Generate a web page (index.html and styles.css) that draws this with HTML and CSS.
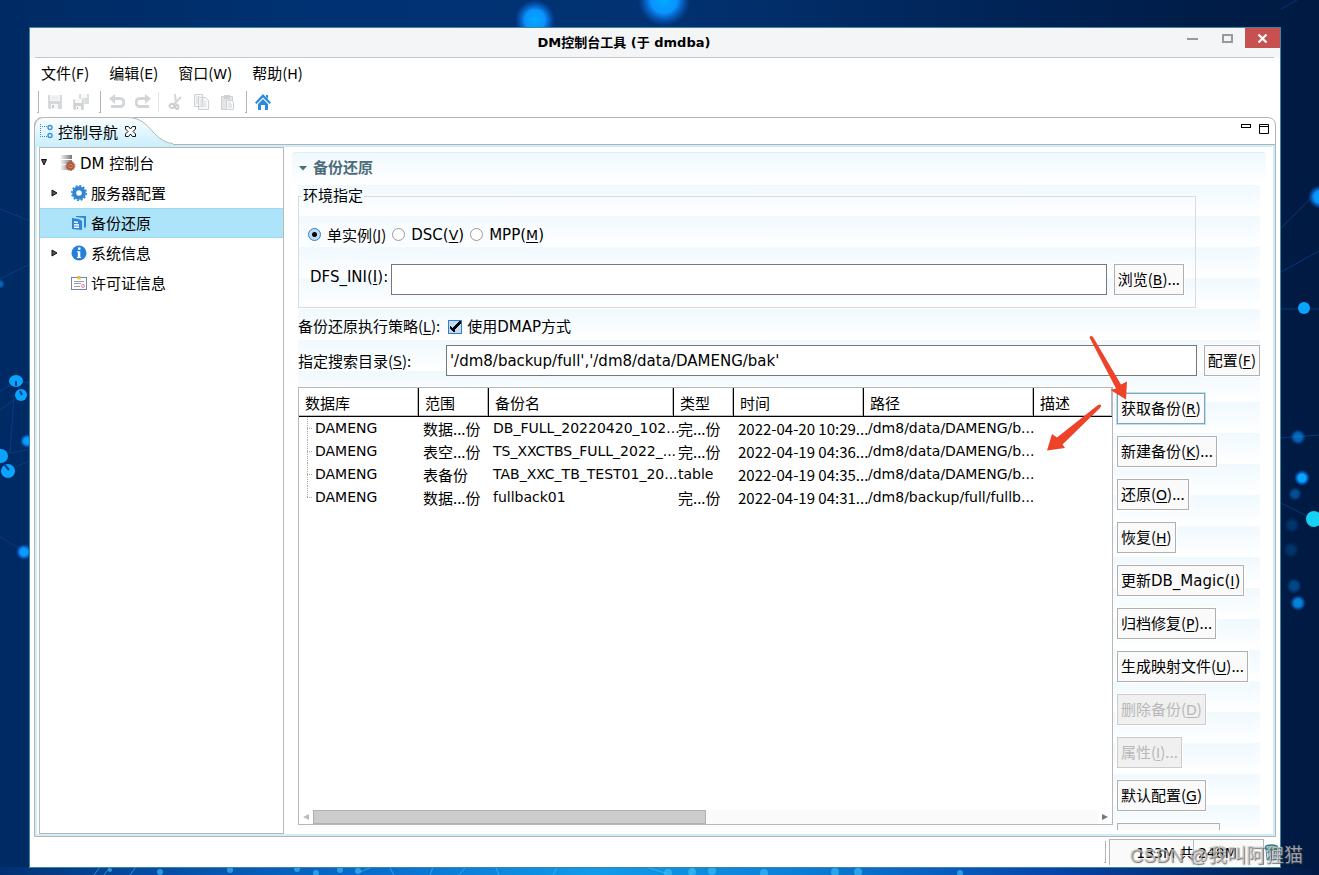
FILE: index.html
```html
<!DOCTYPE html>
<html lang="zh-CN">
<head>
<meta charset="utf-8">
<title>DM控制台工具</title>
<link rel="stylesheet" href="styles.css">
</head>
<body>
<svg class="wallpaper" viewBox="0 0 1319 875" preserveAspectRatio="none" aria-hidden="true">
  <defs>
    <radialGradient id="glow"><stop offset="0" stop-color="#0af"/><stop offset=".5" stop-color="#0a93ff"/><stop offset="1" stop-color="#0a6cf0" stop-opacity="0"/></radialGradient>
    <linearGradient id="floor"><stop offset="0" stop-color="#01306f"/><stop offset=".1" stop-color="#044a9f"/><stop offset=".3" stop-color="#0a70d0"/><stop offset=".45" stop-color="#129be8"/><stop offset=".6" stop-color="#0d7fd6"/><stop offset=".8" stop-color="#0644a8"/><stop offset=".95" stop-color="#012458"/><stop offset="1" stop-color="#001a45"/></linearGradient>
  </defs>
  <rect y="867" width="1319" height="8" fill="url(#floor)"/>
  <g stroke="#0a4a9c" stroke-opacity=".6" fill="none">
    <path d="M0 209l30 12M0 279l30-15M0 391l16-9M16 381l13 2M14 395l-4 58M10 453l20-4M8 470l22-9M0 410l20-14M0 537l24 14M1281 272l38-21M1281 228l38-38M1281 438l38-3M1281 503l32 16M1281 309h38M1281 9l16-9"/>
  </g>
  <g fill="url(#glow)">
    <circle cx="535" cy="20" r="20"/><circle cx="664" cy="0" r="26"/><circle cx="1320" cy="197" r="12"/>
    <circle cx="27" cy="441" r="7"/><circle cx="24" cy="552" r="8"/><circle cx="0" cy="284" r="5" opacity=".5"/>
    <circle cx="1298" cy="437" r="8" opacity=".6"/><circle cx="1302" cy="478" r="8"/><circle cx="1295" cy="494" r="7" opacity=".4"/>
    <circle cx="1292" cy="525" r="8" opacity=".2"/><circle cx="1291" cy="550" r="8" opacity=".2"/><circle cx="1294" cy="586" r="8" opacity=".35"/><circle cx="1298" cy="603" r="8" opacity=".8"/>
  </g>
  <g fill="#0aa4ff">
    <ellipse cx="16" cy="381" rx="7" ry="6"/><circle cx="21" cy="395" r="6"/><circle cx="1" cy="456" r="7"/><circle cx="8" cy="471" r="7"/>
    <circle cx="1304" cy="308" r="6"/><circle cx="1302" cy="478" r="4"/><circle cx="1314" cy="519" r="8" fill="#15d2f5"/>
  </g>
  <path d="M16 381v5M20 391l2 4M4 464l5 6" stroke="#063f8c" stroke-width="2"/>
  <g fill="#3cb8f4" opacity=".7">
    <circle cx="110" cy="870" r="2"/><circle cx="160" cy="872" r="3"/><circle cx="230" cy="870" r="3"/><circle cx="297" cy="869" r="3"/><circle cx="316" cy="873" r="3"/><circle cx="340" cy="870" r="3"/><circle cx="358" cy="871" r="3"/><circle cx="668" cy="873" r="4"/><circle cx="692" cy="872" r="4"/><circle cx="712" cy="871" r="4"/><circle cx="764" cy="873" r="4"/><circle cx="835" cy="872" r="4"/><circle cx="858" cy="872" r="4"/><circle cx="960" cy="873" r="3"/>
  </g>
  <path d="M94 875l6-8M104 875l6-8M130 875l6-8M360 872l12-5M390 868l4 7M430 875l3-8M459 875l7-8M496 868l3 7M553 875l4-8M646 867l22 7M694 868l-4 7" stroke="#4cc3f5" stroke-opacity=".6"/>
</svg>

<div class="window">
  <header class="titlebar">
    <h1>DM控制台工具 (于 dmdba)</h1>
    <div class="window-controls">
      <button aria-label="最小化"><svg width="35" height="20"><path d="M12 11h11" stroke="#999" stroke-width="2"/></svg></button>
      <button aria-label="最大化"><svg width="35" height="20"><rect x="13" y="7" width="9" height="7" fill="none" stroke="#999" stroke-width="2"/></svg></button>
      <button class="close" aria-label="关闭"><svg width="35" height="20"><path d="M13.500 6.500l8 8m0-8l-8 8" stroke="#fff" stroke-width="2.200"/></svg></button>
    </div>
  </header>

  <nav class="menubar cjk">
    <button>文件(<span>F</span>)</button><button>编辑(<span>E</span>)</button><button>窗口(<span>W</span>)</button><button>帮助(<span>H</span>)</button>
  </nav>

  <div class="toolbar">
    <i class="handle"></i>
    <button disabled aria-label="保存"><svg width="16" height="16"><path d="M1 1h14v14H2l-1-1z" fill="#d6d9db"/><path d="M3 1h10v6H3zM4 10h7v5H4z" fill="#f7f7f7"/><path d="M4 3h8M4 5h8" stroke="#e4e6e8"/><path d="M5 11h2v3H5z" fill="#c9ccce"/></svg></button>
    <button disabled aria-label="全部保存"><svg width="18" height="16"><path d="M7 0h10v10H7z" fill="#dadddf"/><path d="M9 0h6v4H9z" fill="#f8f8f8"/><path d="M1 5h11v11H2l-1-1z" fill="#d0d3d5" stroke="#fff" stroke-width=".500"/><path d="M3 5h7v4H3zM4 12h5v4H4z" fill="#f8f8f8"/><path d="M5 13h1v2H5z" fill="#bbb"/></svg></button>
    <i class="handle"></i>
    <button disabled aria-label="撤销"><svg width="16" height="16"><path d="M4 4.500h7a4 4 0 0 1 0 8H2" fill="none" stroke="#d3d6d8" stroke-width="3"/><path d="M0 4.500L6 0v10z" fill="#d3d6d8"/></svg></button>
    <button disabled aria-label="重做"><svg width="16" height="16"><path d="M12 4.500H5a4 4 0 0 0 0 8h9" fill="none" stroke="#d3d6d8" stroke-width="3"/><path d="M16 4.500L10 0v10z" fill="#d3d6d8"/></svg></button>
    <i class="divider"></i>
    <button disabled aria-label="剪切"><svg width="16" height="16"><path d="M8 0l1 10M14 3L6 11" stroke="#d3d6d8" stroke-width="2" fill="none"/><ellipse cx="5" cy="12" rx="2.500" ry="2" fill="none" stroke="#cbced0" stroke-width="1.800"/><ellipse cx="10" cy="13" rx="1.500" ry="2" fill="none" stroke="#cbced0" stroke-width="1.800"/></svg></button>
    <button disabled aria-label="复制"><svg width="16" height="16"><path d="M1.500.500h8v12h-8zM5.500 3.500h7l3 3v9h-10z" fill="#f7f7f7" stroke="#cfd2d5"/><path d="M3 3h4M3 5h2M3 7h2M3 9h2M7 6h4M7 8h6M7 10h6M7 12h6" stroke="#d6d9db"/></svg></button>
    <button disabled aria-label="粘贴"><svg width="16" height="16"><path d="M2.500 2.500h11v13h-11z" fill="#e3e5e7" stroke="#cfd2d5"/><path d="M5 1h6v4H5z" fill="#cfd2d5"/><path d="M7.500 6.500h5l2 2v7h-7z" fill="#fafafa" stroke="#cfd2d5"/><path d="M9 9h3M9 11h4M9 13h4" stroke="#cfd2d5"/></svg></button>
    <i class="handle"></i>
    <button aria-label="主页"><svg width="16" height="16"><path d="M0 8.500L8 0l8 8.500L14.500 10 8 3.500 1.500 10z" fill="#2e8ade"/><path d="M3 10l5-5 5 5v6h-3v-5H6v5H3zM11 1h2v4l-2-2z" fill="#2e8ade"/></svg></button>
  </div>

  <main class="folder">
    <div class="tabbar">
      <div class="tab">
        <svg class="tab-shape" width="138" height="28"><defs><linearGradient id="tabfill" x2="0" y2="1"><stop offset="0" stop-color="#fbfeff"/><stop offset="1" stop-color="#cbeffc"/></linearGradient></defs><path d="M0 28V8Q1 1 8 0H92C106 0 112 8 119 16Q128 26 138 27v1z" fill="url(#tabfill)"/><path d="M0 8.500Q1 1 8.500.500H92C106 .500 112 8 119 16Q128 26 138 26.500" fill="none" stroke="#b4b4b4"/></svg>
        <svg width="14" height="16"><path d="M1.500 1v12.500M1 3.500h7M1 13.500h7" fill="none" stroke="#3c8fd9" stroke-dasharray="1 1"/><circle cx="11" cy="4.500" r="2" fill="none" stroke="#3c8fd9" stroke-width="1.400"/><circle cx="11" cy="12.500" r="2" fill="none" stroke="#3c8fd9" stroke-width="1.400"/></svg>
        <span>控制导航</span>
        <button aria-label="关闭标签"><svg width="11" height="11"><path d="M.500.500h3l2 2.500 2-2.500h3v2.500l-2.500 2.500 2.500 2.500v2.500h-3l-2-2.500-2 2.500h-3V8L3 5.500.500 3z" fill="#fff" stroke="#111"/></svg></button>
      </div>
      <div class="tab-tools">
        <button aria-label="最小化视图"><svg width="10" height="10"><rect x=".500" y=".500" width="9" height="3" fill="#fff" stroke="#000"/></svg></button>
        <button aria-label="最大化视图"><svg width="10" height="10"><path d="M.500.500h9v9h-9zM0 2.500h10" fill="none" stroke="#000"/></svg></button>
      </div>
    </div>

    <div class="folder-body">
      <ul class="tree">
        <li><svg class="twist" width="8" height="10"><path d="M1.500 1.500h5L4 7z" fill="#555" stroke="#111"/></svg>
          <svg width="16" height="16"><defs><linearGradient id="srv"><stop offset="0" stop-color="#eee"/><stop offset="1" stop-color="#777"/></linearGradient></defs><path d="M1 0h11v4H1zM1 5h11v4H1zM1 10h11v5H1z" fill="url(#srv)"/><circle cx="10.500" cy="11" r="3.200" fill="#d38a6c" stroke="#b0593a" stroke-width="2"/><circle cx="10.500" cy="11" r="4.500" fill="none" stroke="#b0593a" stroke-dasharray="1.500 1.300"/><circle cx="10.500" cy="11" r="1.200" fill="#a34d30"/></svg>
          <span>DM 控制台</span></li>
        <li class="child"><svg class="twist" width="8" height="10"><path d="M1 2l5 3-5 3z" fill="#555" stroke="#111"/></svg>
          <svg width="16" height="16"><circle cx="8" cy="8" r="4.800" fill="#fff" stroke="#2e86d6" stroke-width="4"/><circle cx="8" cy="8" r="7.200" fill="none" stroke="#2e86d6" stroke-width="1.600" stroke-dasharray="2 1.770"/></svg>
          <span>服务器配置</span></li>
        <li class="child selected"><i class="twist"></i>
          <svg width="16" height="16"><path d="M5 1l10 0v11l-2 1V3L5 2z" fill="#2e86d6"/><path d="M1 3l7 1 3 2v9L1 14z" fill="#2e86d6"/><path d="M3 7l4 .500M3 9.700l5 .300M3 12.300h5" stroke="#fff" stroke-width="1.400"/></svg>
          <span>备份还原</span></li>
        <li class="child"><svg class="twist" width="8" height="10"><path d="M1 2l5 3-5 3z" fill="#555" stroke="#111"/></svg>
          <svg width="16" height="16"><circle cx="8" cy="8" r="7.500" fill="#2680d8"/><path d="M7 2.500h2.500v2.200H7zM6 6.300h3.300V12H10v1H6v-1h.800V7.300H6z" fill="#fff"/></svg>
          <span>系统信息</span></li>
        <li class="child"><i class="twist"></i>
          <svg width="16" height="16"><rect x=".500" y="2.500" width="15" height="12" fill="#fff" stroke="#7084ad"/><path d="M3 6.500h10M3 8.500h7M3 11.500h6" stroke="#8ea0c0"/><path d="M6.500 1h3v4L8 4l-1.500 1z" fill="#f2b932"/><circle cx="12" cy="11" r="1.500" fill="none" stroke="#e87f9c"/></svg>
          <span>许可证信息</span></li>
      </ul>

      <section class="form">
        <h2><svg width="8" height="5"><path d="M0 0h8L4 4.500z" fill="#4c6c78"/></svg>备份还原</h2>
        <div class="content">
          <fieldset>
            <legend>环境指定</legend>
            <div class="radios cjk">
              <label><input type="radio" name="mode" checked>单实例(<u>J</u>)</label>
              <label class="latin"><input type="radio" name="mode">DSC(<u>V</u>)</label>
              <label class="latin"><input type="radio" name="mode">MPP(<u>M</u>)</label>
            </div>
            <div class="row ini">
              <label for="ini">DFS_INI(<u>I</u>):</label>
              <input class="text" type="text" id="ini">
              <button class="btn cjk">浏览(<u>B</u>)...</button>
            </div>
          </fieldset>
          <div class="row policy cjk">
            <span>备份还原执行策略(<u>L</u>):</span>
            <label class="latin"><input type="checkbox" checked>使用DMAP方式</label>
          </div>
          <div class="row search">
            <label class="cjk" for="dir">指定搜索目录(<u>S</u>):</label>
            <input class="text" type="text" id="dir" value="'/dm8/backup/full','/dm8/data/DAMENG/bak'">
            <button class="btn cjk">配置(<u>F</u>)</button>
          </div>
          <div class="results">
            <div class="grid">
              <table>
                <colgroup><col class="c120"><col class="c70"><col class="c185"><col class="c60"><col class="c130"><col class="c170"><col></colgroup>
                <thead><tr><th>数据库</th><th>范围</th><th>备份名</th><th>类型</th><th>时间</th><th>路径</th><th>描述</th></tr></thead>
                <tbody>
                  <tr><td>DAMENG</td><td class="cjk">数据...份</td><td>DB_FULL_20220420_102...</td><td class="cjk">完...份</td><td class="cjk">2022-04-20 10:29...</td><td>/dm8/data/DAMENG/b...</td><td></td></tr>
                  <tr><td>DAMENG</td><td class="cjk">表空...份</td><td>TS_XXCTBS_FULL_2022_...</td><td class="cjk">完...份</td><td class="cjk">2022-04-19 04:36...</td><td>/dm8/data/DAMENG/b...</td><td></td></tr>
                  <tr><td>DAMENG</td><td class="cjk">表备份</td><td>TAB_XXC_TB_TEST01_20...</td><td>table</td><td class="cjk">2022-04-19 04:35...</td><td>/dm8/data/DAMENG/b...</td><td></td></tr>
                  <tr><td>DAMENG</td><td class="cjk">数据...份</td><td>fullback01</td><td class="cjk">完...份</td><td class="cjk">2022-04-19 04:31...</td><td>/dm8/backup/full/fullb...</td><td></td></tr>
                </tbody>
              </table>
              <div class="scrollbar">
                <svg width="14" height="14"><path d="M10 4v6L4 7z" fill="#bbb"/></svg>
                <div class="track"><div class="thumb"></div></div>
                <svg width="14" height="14"><path d="M4 4v6l6-3z" fill="#777"/></svg>
              </div>
            </div>
            <div class="actions cjk">
              <button class="btn focus">获取备份(<u>R</u>)</button>
              <button class="btn">新建备份(<u>K</u>)...</button>
              <button class="btn">还原(<u>O</u>)...</button>
              <button class="btn">恢复(<u>H</u>)</button>
              <button class="btn latin">更新DB_Magic(<u>I</u>)</button>
              <button class="btn">归档修复(<u>P</u>)...</button>
              <button class="btn">生成映射文件(<u>U</u>)...</button>
              <button class="btn" disabled>删除备份(<u>D</u>)</button>
              <button class="btn" disabled>属性(<u>I</u>)...</button>
              <button class="btn">默认配置(<u>G</u>)</button>
              <button class="btn blank" aria-label="更多"></button>
            </div>
          </div>
        </div>
      </section>
    </div>
  </main>

  <footer class="status">
    <i class="handle"></i>
    <div class="heap"><span>133M 共 248M</span></div>
    <button aria-label="回收内存"><svg width="16" height="18"><path d="M2 6h11l-1 11H3z" fill="#d5e6ef" stroke="#4c88a8"/><ellipse cx="7.500" cy="4.500" rx="6" ry="2.500" fill="#9dbf8c" stroke="#2f7fa5" stroke-width="1.500"/><path d="M5 8v8M7.500 8v8M10 8v8" stroke="#4c88a8"/></svg></button>
  </footer>
</div>

<svg class="arrows" width="80" height="125" viewBox="1040 330 80 125" aria-hidden="true">
  <path d="M1089.500 337.500Q1091 335 1093 337L1121 384.500 1127 381.500 1126 399.500 1110.500 390 1116 388.500zM1101 405Q1101.500 406 1100 408L1062.500 444.500 1065 448 1047 450.500 1052 434 1057 437.500 1098 405Q1100 404 1101 405z" fill="#ee4328"/>
</svg>
<div class="watermark">CSDN @我叫阿狸猫</div>
</body>
</html>
```
FILE: styles.css
```css
* { box-sizing: border-box; }

body {
  margin: 0;
  height: 100vh;
  padding: 27px 38px 7px 29px;
  overflow: hidden;
  position: relative;
  background: linear-gradient(90deg, #002a63 0%, #003273 25%, #023272 50%, #001f4d 85%, #001a42 100%);
  font: 15px/22px "DejaVu Sans", "Noto Sans CJK SC", sans-serif;
  color: #000;
}

button, input { font: inherit; color: inherit; margin: 0; }
button { padding: 0; border: 0; background: none; }
svg { display: block; flex: none; }
u { text-underline-offset: 2px; }

.cjk { font-family: "Noto Sans CJK SC", sans-serif; }
.cjk u, .cjk button span, .cjk .latin { font-family: "DejaVu Sans", "Noto Sans CJK SC", sans-serif; }
.cjk u, .cjk button span { font-size: 14px; }

.wallpaper { position: absolute; inset: 0; width: 100%; height: 100%; z-index: -1; }

.window {
  height: 100%;
  display: flex;
  flex-direction: column;
  border: 1px solid #3b86a0;
  background: #fff;
}

.titlebar {
  height: 30px;
  flex: none;
  position: relative;
  background: linear-gradient(#c8c9cb, #c8c9cb) 5px 100% / calc(100% - 11px) 1px no-repeat #f4f5f7;
}
.titlebar h1 {
  margin: 0;
  padding-right: 62px;
  text-align: center;
  font: bold 13px/30px "DejaVu Sans", "Noto Sans CJK SC", sans-serif;
}
.window-controls { position: absolute; top: 0; right: 0; display: flex; }
.close { background: #c75050; }

.menubar { display: flex; gap: 20px; padding: 4px 11px; height: 30px; flex: none; }

.toolbar { display: flex; align-items: center; height: 29px; flex: none; padding: 0 7px 2px; }
.toolbar button { width: 26px; display: flex; justify-content: center; }
.handle { width: 2px; height: 22px; border: solid #b4b4b4; border-width: 0 1px 1px 0; margin-right: 3px; flex: none; }
.toolbar .handle:not(:first-child) { margin-left: 5px; }
.divider { width: 1px; height: 20px; background: #e4e4e4; margin: 0 3px 0 2px; }

.folder {
  flex: 1;
  min-height: 0;
  margin: 0 4px;
  display: flex;
  flex-direction: column;
  border: 1px solid #b4b4b4;
  border-radius: 8px 8px 0 0;
}
.tabbar { display: flex; justify-content: space-between; height: 27px; flex: none; border-bottom: 1px solid #b4b4b4; }
.tab { position: relative; display: flex; align-items: center; gap: 5px; padding-left: 4px; width: 138px; }
.tab > * { position: relative; }
.tab > .tab-shape { position: absolute; left: 0; top: -1px; }
.tab span { margin-top: 3px; }
.tab button { margin-left: 2px; }
.tab-tools { display: flex; gap: 8px; padding: 6px 6px; align-items: flex-start; }

.folder-body {
  flex: 1;
  min-height: 0;
  display: flex;
  border: 2px solid #cdeefb;
  padding: 0 1px 0 2px;
}
.tree {
  list-style: none;
  margin: 0;
  padding: 0;
  width: 245px;
  flex: none;
  border: 1px solid #b8b8b8;
}
.tree li { display: flex; align-items: center; gap: 4px; height: 30px; }
.tree .child { padding-left: 11px; }
.tree .twist { width: 8px; margin-right: 8px; }
.tree .child .twist { margin-right: 8px; }
.tree span { margin-top: 2px; }
.tree .selected { background: #aee4f9; border: solid #9ad9f0; border-width: 1px 0; }

.form {
  flex: 1;
  min-width: 0;
  display: flex;
  flex-direction: column;
  padding: 5px 6px 4px 8px;
}
.form h2 {
  margin: 0;
  height: 33px;
  flex: none;
  display: flex;
  align-items: center;
  gap: 6px;
  padding: 0 0 2px 7px;
  font-size: 15px;
  color: #4c6c78;
  background: linear-gradient(#f0f9fe, #fff);
  border-top: 1px solid #d8f1fb;
  border-radius: 4px 4px 0 0;
}
.content {
  flex: 1;
  min-height: 0;
  overflow: hidden;
  display: flex;
  flex-direction: column;
  margin: 0 6px;
  background: repeating-linear-gradient(#f0f9fe 0, #fff 31px);
}

fieldset {
  margin: 0 64px 0 0;
  padding: 16px 11px 12px;
  border: 1px solid #dcdcdc;
  flex: none;
}
legend { padding: 0 1px; margin-left: -8px; line-height: 22px; }

.radios { display: flex; gap: 6px; height: 23px; margin: 0 0 18px -2px; }
label { display: flex; align-items: center; white-space: pre; }
.radios label { background: #fafdff; }

input[type="radio"], input[type="checkbox"] {
  appearance: none;
  width: 13px;
  height: 13px;
  margin-right: 6px;
  flex: none;
  border: 1px solid #999;
  background: #fff;
}
input[type="radio"] { border-radius: 50%; }
input[type="radio"]:checked { border-color: #3d7ab8; background: radial-gradient(#000 0 2px, #bcdcf8 3px); }
input[type="checkbox"] { width: 14px; height: 14px; margin-right: 5px; }
input[type="checkbox"]:checked {
  border-color: #3d7ab8;
  background:
    linear-gradient(45deg, transparent 0 36%, #000 36% 56%, transparent 56%) 1px 5px / 5px 6px no-repeat,
    linear-gradient(135deg, transparent 0 42%, #000 42% 58%, transparent 58%) 3px 0 / 9px 10px no-repeat,
    #bcdcf8;
}

.row { display: flex; align-items: center; flex: none; }
.text {
  flex: 1;
  min-width: 0;
  height: 31px;
  padding: 0 3px;
  border: 1px solid #777;
  background: #fff;
  border-radius: 0;
}
.btn {
  height: 31px;
  flex: none;
  padding: 0 3px;
  border: 1px solid #b0b0b0;
  background: #fafafa;
  outline: 1px solid #fff;
  white-space: nowrap;
}
.row .btn { margin-left: 7px; }
.btn:disabled { color: #b8b8b8; background: #f0f0f0; border-color: #ccc; }
.btn.focus { border-color: #83a5b5; outline-color: #b5e2f3; }
.ini label { width: 81px; padding-bottom: 6px; }
.policy { height: 37px; gap: 8px; white-space: nowrap; }
.search label { width: 148px; }

.results { flex: 1; min-height: 0; display: flex; gap: 4px; margin-top: 11px; }
.grid {
  flex: 1;
  min-width: 0;
  display: flex;
  flex-direction: column;
  justify-content: space-between;
  margin-bottom: 5px;
  border: 1px solid #b8b8b8;
  background: #fff;
}
table { width: 100%; table-layout: fixed; border-collapse: separate; border-spacing: 0; }
.c120 { width: 120px; }
.c70 { width: 70px; }
.c185 { width: 185px; }
.c60 { width: 60px; }
.c130 { width: 130px; }
.c170 { width: 170px; }
th {
  height: 29px;
  padding: 3px 6px 0;
  text-align: left;
  font-weight: normal;
  line-height: 24px;
  border-right: 1px solid #000;
  border-bottom: 1px solid #000;
  box-shadow: inset -1px -1px #bbb;
}
th:last-child { border-right: 0; }
td {
  height: 23px;
  padding: 0 0 0 4px;
  font-size: 14px;
  line-height: 23px;
  white-space: nowrap;
}
td.cjk { font-size: 15px; }
td:first-child {
  padding-left: 16px;
  background:
    repeating-linear-gradient(#aaa 0 1px, transparent 1px 2px) 8px 0 / 1px 100% no-repeat,
    repeating-linear-gradient(90deg, #aaa 0 1px, transparent 1px 2px) 8px 11px / 5px 1px no-repeat;
}
tr:last-child td:first-child {
  background-size: 1px 11px, 5px 1px;
}

.scrollbar { display: flex; height: 14px; }
.track { flex: 1; background: #fafafa; }
.thumb { width: 50%; height: 100%; background: #ccc; border: 1px solid #b0b0b0; }

.actions { width: 143px; flex: none; display: flex; flex-direction: column; align-items: flex-start; gap: 12px; padding-top: 6px; }
.blank { width: 103px; }

.status { display: flex; align-items: center; height: 30px; flex: none; justify-content: flex-end; }
.heap {
  height: 26px;
  width: 155px;
  border: solid #b4b4b4;
  border-width: 1px 1px 0 1px;
  text-align: center;
  background: linear-gradient(#bbb, #bbb) 83px 0 / 1px 100% no-repeat #fafafa;
  font-size: 14px;
  line-height: 27px;
}
.status button { width: 16px; }

.arrows { position: absolute; left: 1040px; top: 330px; overflow: visible; }
.watermark {
  position: absolute;
  right: 16px;
  bottom: 6px;
  font: 19px/26px "Liberation Sans", "Noto Sans CJK SC", sans-serif;
  color: rgba(200, 200, 200, .75);
  text-shadow: 1px 1px 1px rgba(70, 70, 70, .75);
}
```
